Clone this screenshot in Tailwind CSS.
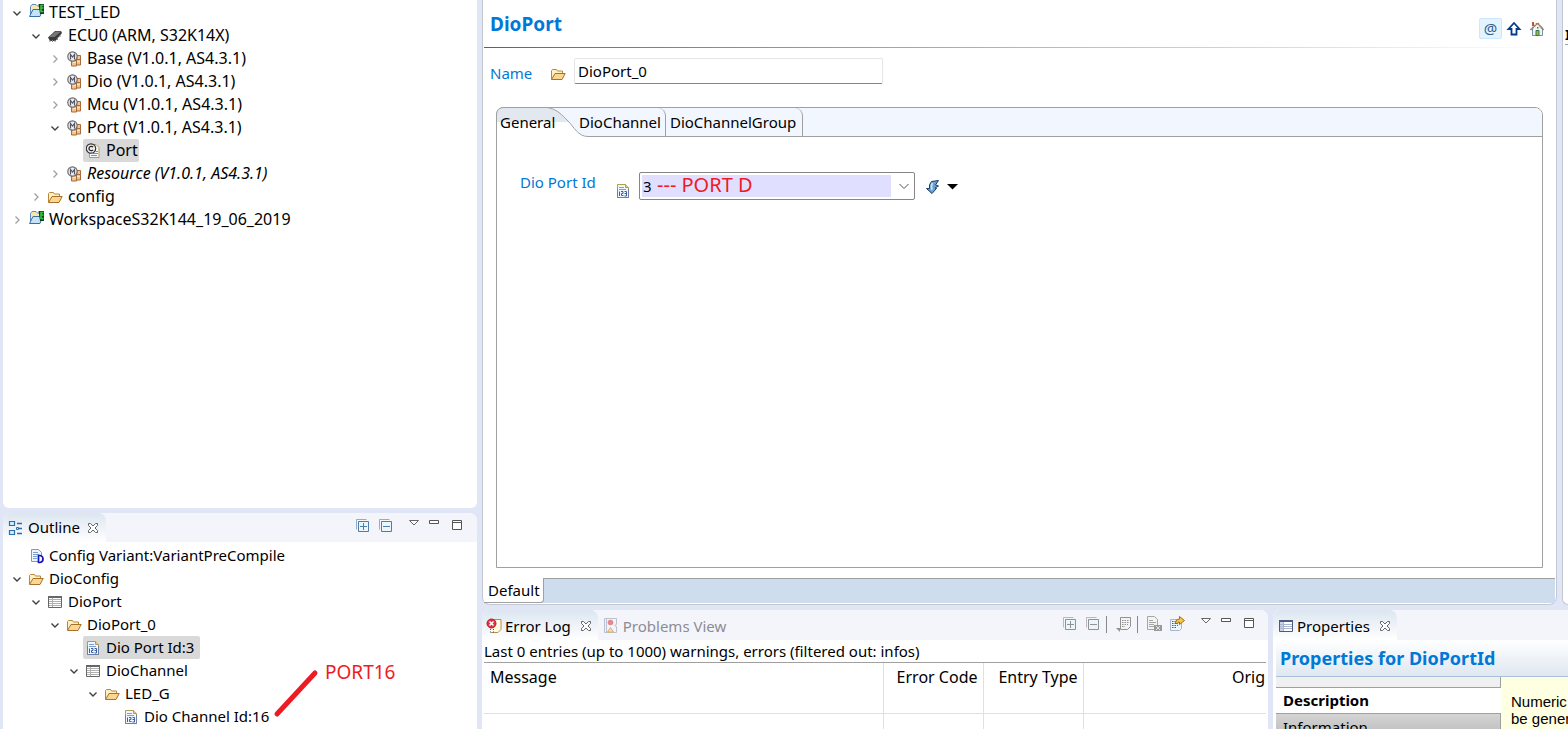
<!DOCTYPE html>
<html lang="en">

<head>
  <meta charset="UTF-8">
  <meta name="viewport" content="width=device-width, initial-scale=1.0">
  <title>DioPort</title>
  <script src="https://cdn.jsdelivr.net/npm/@tailwindcss/browser@4"></script>
</head>

<body class="bg-[#e1e6f6] font-['Noto_Sans','Open_Sans',sans-serif] text-[15px] leading-[23px] text-black">
  <!-- icon sheet -->
  <svg class="hidden">
    <symbol id="down" viewBox="0 0 16 16">
      <path d="M4.500 6.500 8 10l3.500-3.500" fill="none" stroke="#404040" stroke-width="1.400" />
    </symbol>
    <symbol id="right" viewBox="0 0 16 16">
      <path d="M6.500 4.500 10 8l-3.500 3.500" fill="none" stroke="#a0a0a0" stroke-width="1.300" />
    </symbol>
    <symbol id="project" viewBox="0 0 16 16">
      <path d="M1.500 12V3.500L3 1.500h4l1.500 1.500H11v9z" fill="#f7e7ae" stroke="#5f8cc0" />
      <path d="M.5 13.500 4 6.500h9.500L11 13.500z" fill="#c3e4f8" stroke="#3d6da6" />
      <path d="M9.500 1h5.500v10h-4z" fill="#173a1c" />
      <path d="M14.500 2.500H12v2.500h2.500M12 5.500v3h2.500" fill="none" stroke="#2fd03e" stroke-width="1.500" />
    </symbol>
    <symbol id="chip" viewBox="1 0 16 16">
      <path d="M1 9.500 8 3h6l1 2-6.500 8H3z" fill="#3b3b3b" />
      <path d="M2 9 8.500 3.500H14L7.500 9z" fill="#777" />
      <path d="M3 12v2M5.500 12v2M8 12v2M10.500 9.500V12M13 7v2" stroke="#8a8a8a" />
    </symbol>
    <symbol id="module" viewBox="1 0 16 16">
      <path d="M5.500 9.500h5V15h-5zM10.500 4.500h4v4h-4zM10.500 8.500h4V14h-4z" fill="#f0c48c" stroke="#a9693a" />
      <path d="M7 11.500h3M11 10.500h3" stroke="#fbe6c2" />
      <circle cx="6.500" cy="5.500" r="4.700" fill="#eeeef2" stroke="#6a6a72" stroke-width="1.200" />
      <path d="M4.500 8.500V3.500l2 2.500 2-2.500v5" fill="none" stroke="#55555f" stroke-width="1.200" />
    </symbol>
    <symbol id="cfile" viewBox="1 0 16 16">
      <path d="M4.500 1.500H11l3 3v10H4.500z" fill="#f4f8fd" stroke="#b39b55" />
      <path d="M6 12.500h6M8 10.500h5M11 8.500h2" stroke="#6c94ca" />
      <circle cx="6" cy="5.500" r="4.700" fill="#eee" stroke="#333" stroke-width="1.200" />
      <path d="M8 4.200a2.200 2.200 0 1 0 0 2.600" fill="none" stroke="#222" stroke-width="1.300" />
    </symbol>
    <symbol id="folder" viewBox="1 0 16 16">
      <path d="M1.500 13V4.500l1-1h4l1 1.500h5V7" fill="#fdf0c4" stroke="#b8873a" />
      <path d="M1.500 13.500 5 7.500h10.200L12 13.500z" fill="#f9d691" stroke="#a8702a" />
    </symbol>
    <symbol id="list" viewBox="1 0 16 16">
      <path d="M1.500 2.500h13v11h-13z" fill="#fff" stroke="#666" />
      <path d="M1 2h14v2H1z" fill="#666" />
      <path d="M5.500 4v9M2 5.500h12M2 7.500h12M2 9.500h12M2 11.500h12" stroke="#b0b0b0" />
    </symbol>
    <symbol id="num" viewBox="1 0 16 16">
      <path d="M2.500 1.500h8l3 3v10h-11z" fill="#f0f6fd" stroke="#b39b55" />
      <path d="M2.500 6v8.500h11V6" fill="none" stroke="#6b7fa8" />
      <path d="M10.500 1.500v3h3" fill="#e7cf8c" stroke="#b39b55" />
      <path d="M4 4.500h5M4 6.500h7" stroke="#7ba0d3" />
      <path d="M4.500 8.500V13M6 8.500h2v2H6.500v2H8.500M9.500 8.500h2V13h-2M9.500 10.500h2" fill="none" stroke="#3a5f9f" />
    </symbol>
    <symbol id="variant" viewBox="0 0 16 16">
      <path d="M2.500 1.500h7l3 3v9h-10z" fill="#eff5fc" stroke="#9b9877" />
      <path d="M4 4.500h5M4 6.500h6M4 8.500h4M4 10.500h4" stroke="#7ba0d3" />
      <path d="M9.500 7.500h1.500q3 .5 3 3.500t-3 3.500H9.500z" fill="#fff" stroke="#1414b8" stroke-width="1.700" />
    </symbol>
    <symbol id="outline" viewBox="0 0 16 16">
      <path d="M1.500 1.500h5v4h-5zM1.500 10.500h5v4h-5z" fill="#d4ecfa" stroke="#2b6da8" stroke-width="1.200" />
      <path d="M9 3.500h5M9 13.500h5M11 8.500h3" stroke="#2b6da8" stroke-width="1.300" />
      <path d="M8.500 7.500h2v2h-2z" fill="#d4ecfa" stroke="#2b6da8" />
    </symbol>
    <symbol id="close" viewBox="0 0 12 12">
      <path d="M1.500 1.500h2L6 4l2.500-2.500h2v2L8 6l2.500 2.500v2h-2L6 8l-2.500 2.500h-2v-2L4 6 1.500 3.500z" fill="#fff" stroke="#666" />
    </symbol>
    <symbol id="expand" viewBox="0 0 16 16">
      <path d="M1.500 11.500v-10h10" fill="none" stroke="currentColor" opacity=".6" />
      <path d="M3.500 3.500h10v10h-10z" fill="#eaf5fc" stroke="currentColor" />
      <path d="M5 8.500h7M8.500 5v7" stroke="currentColor" />
    </symbol>
    <symbol id="collapse" viewBox="0 0 16 16">
      <path d="M1.500 11.500v-10h10" fill="none" stroke="currentColor" opacity=".6" />
      <path d="M3.500 3.500h10v10h-10z" fill="#eaf5fc" stroke="currentColor" />
      <path d="M5 8.500h7" stroke="currentColor" />
    </symbol>
    <symbol id="menu" viewBox="0 0 12 12">
      <path d="M1.500 1.500h9L6 6z" fill="#fff" stroke="#666" />
    </symbol>
    <symbol id="min" viewBox="0 0 12 12">
      <path d="M1.500 1.500h9v3h-9z" fill="#fff" stroke="#555" />
    </symbol>
    <symbol id="max" viewBox="0 0 12 12">
      <path d="M1.500 1.500h9v9h-9zM1.500 3.500h9" fill="#fff" stroke="#555" />
    </symbol>
  </svg>

  <div class="flex h-screen gap-[5px] overflow-hidden pl-[3px]">
    <!-- left side: project tree + outline -->
    <aside class="flex w-[474px] shrink-0 flex-col gap-[5px]">
      <section class="flex-1 rounded-b-md bg-white pt-px">
        <ul class="text-base/[23px] whitespace-nowrap">
          <li class="flex items-center gap-px pl-[6px]">
            <button aria-label="Collapse"><svg class="size-4"><use href="#down" /></svg></button>
            <span class="flex gap-1 px-[3px]"><svg class="mt-[2px] size-4"><use href="#project" /></svg>TEST_LED</span>
          </li>
          <li class="flex items-center gap-px pl-[25px]">
            <button aria-label="Collapse"><svg class="size-4"><use href="#down" /></svg></button>
            <span class="flex items-center gap-1 px-[3px]"><svg class="size-4"><use href="#chip" /></svg>ECU0 (ARM, S32K14X)</span>
          </li>
          <li class="flex items-center gap-px pl-[44px]">
            <button aria-label="Expand"><svg class="size-4"><use href="#right" /></svg></button>
            <span class="flex items-center gap-1 px-[3px]"><svg class="size-4"><use href="#module" /></svg>Base (V1.0.1, AS4.3.1)</span>
          </li>
          <li class="flex items-center gap-px pl-[44px]">
            <button aria-label="Expand"><svg class="size-4"><use href="#right" /></svg></button>
            <span class="flex items-center gap-1 px-[3px]"><svg class="size-4"><use href="#module" /></svg>Dio (V1.0.1, AS4.3.1)</span>
          </li>
          <li class="flex items-center gap-px pl-[44px]">
            <button aria-label="Expand"><svg class="size-4"><use href="#right" /></svg></button>
            <span class="flex items-center gap-1 px-[3px]"><svg class="size-4"><use href="#module" /></svg>Mcu (V1.0.1, AS4.3.1)</span>
          </li>
          <li class="flex items-center gap-px pl-[44px]">
            <button aria-label="Collapse"><svg class="size-4"><use href="#down" /></svg></button>
            <span class="flex items-center gap-1 px-[3px]"><svg class="size-4"><use href="#module" /></svg>Port (V1.0.1, AS4.3.1)</span>
          </li>
          <li class="flex items-center pl-[80px]">
            <span class="flex items-center gap-1 rounded-xs bg-[#d9d9d9] pr-px pl-[3px]"><svg class="size-4"><use href="#cfile" /></svg>Port</span>
          </li>
          <li class="flex items-center gap-px pl-[44px]">
            <button aria-label="Expand"><svg class="size-4"><use href="#right" /></svg></button>
            <span class="flex items-center gap-1 px-[3px] italic"><svg class="size-4"><use href="#module" /></svg>Resource (V1.0.1, AS4.3.1)</span>
          </li>
          <li class="flex items-center gap-px pl-[25px]">
            <button aria-label="Expand"><svg class="size-4"><use href="#right" /></svg></button>
            <span class="flex items-center gap-1 px-[3px]"><svg class="size-4"><use href="#folder" /></svg>config</span>
          </li>
          <li class="flex items-center gap-px pl-[6px]">
            <button aria-label="Expand"><svg class="size-4"><use href="#right" /></svg></button>
            <span class="flex gap-1 px-[3px]"><svg class="mt-[2px] size-4"><use href="#project" /></svg>WorkspaceS32K144_19_06_2019</span>
          </li>
        </ul>
      </section>

      <section class="relative h-[216px] shrink-0 overflow-hidden rounded-t-lg bg-white">
        <div class="flex h-[29px] items-stretch justify-between bg-[#f4f5fb]">
          <div class="flex items-center gap-1 rounded-tr-lg bg-linear-to-b from-[#dce6f0] to-white pr-[7px] pl-[5px]">
            <svg class="size-4"><use href="#outline" /></svg>
            <span>Outline</span>
            <button aria-label="Close" class="ml-[3px]"><svg class="size-3"><use href="#close" /></svg></button>
          </div>
          <div class="flex items-start pt-[5px] pr-[14px] text-[#4f7da8]">
            <button aria-label="Expand all" class="mr-[7px]"><svg class="size-4"><use href="#expand" /></svg></button>
            <button aria-label="Collapse all" class="mr-[14px]"><svg class="size-4"><use href="#collapse" /></svg></button>
            <button aria-label="Menu" class="mt-px mr-2"><svg class="size-3"><use href="#menu" /></svg></button>
            <button aria-label="Minimize" class="mt-px mr-[11px]"><svg class="size-3"><use href="#min" /></svg></button>
            <button aria-label="Maximize" class="mt-px"><svg class="size-3"><use href="#max" /></svg></button>
          </div>
        </div>
        <ul class="pt-[2px] whitespace-nowrap">
          <li class="flex items-center pl-[23px]">
            <span class="flex items-center gap-1 px-[3px]"><svg class="size-4"><use href="#variant" /></svg>Config Variant:VariantPreCompile</span>
          </li>
          <li class="flex items-center gap-px pl-[6px]">
            <button aria-label="Collapse"><svg class="size-4"><use href="#down" /></svg></button>
            <span class="flex items-center gap-1 px-[3px]"><svg class="size-4"><use href="#folder" /></svg>DioConfig</span>
          </li>
          <li class="flex items-center gap-px pl-[25px]">
            <button aria-label="Collapse"><svg class="size-4"><use href="#down" /></svg></button>
            <span class="flex items-center gap-1 px-[3px]"><svg class="size-4"><use href="#list" /></svg>DioPort</span>
          </li>
          <li class="flex items-center gap-px pl-[44px]">
            <button aria-label="Collapse"><svg class="size-4"><use href="#down" /></svg></button>
            <span class="flex items-center gap-1 px-[3px]"><svg class="size-4"><use href="#folder" /></svg>DioPort_0</span>
          </li>
          <li class="flex items-center pl-[80px]">
            <span class="flex items-center gap-1 rounded-xs bg-[#d9d9d9] pr-[6px] pl-[3px]"><svg class="size-4"><use href="#num" /></svg>Dio Port Id:3</span>
          </li>
          <li class="flex items-center gap-px pl-[63px]">
            <button aria-label="Collapse"><svg class="size-4"><use href="#down" /></svg></button>
            <span class="flex items-center gap-1 px-[3px]"><svg class="size-4"><use href="#list" /></svg>DioChannel</span>
          </li>
          <li class="flex items-center gap-px pl-[82px]">
            <button aria-label="Collapse"><svg class="size-4"><use href="#down" /></svg></button>
            <span class="flex items-center gap-1 px-[3px]"><svg class="size-4"><use href="#folder" /></svg>LED_G</span>
          </li>
          <li class="flex items-center pl-[118px]">
            <span class="flex items-center gap-1 px-[3px]"><svg class="size-4"><use href="#num" /></svg>Dio Channel Id:16</span>
          </li>
        </ul>
        <!-- red marker note on the channel id -->
        <div class="absolute top-[148px] left-[270px] flex items-start gap-1 text-[19px] text-[#ed1c24]">
          <svg class="mt-[8px] h-[50px] w-[48px]"><path d="M4 45 42 4" stroke="#ed1c24" stroke-width="5" stroke-linecap="round" /></svg>
          <span>PORT16</span>
        </div>
      </section>
    </aside>

    <main class="flex min-w-0 flex-1 flex-col gap-[5px]">
      <div class="flex min-h-0 flex-1 gap-[5px]">
        <!-- editor -->
        <section class="flex min-w-0 flex-1 flex-col rounded-b-lg border border-t-0 border-[#c3c7d0] bg-white pb-px">
          <header class="mr-[9px] ml-px flex h-[47px] items-start justify-between pl-[6px]">
            <h1 class="pt-[13px] text-[19px] font-bold text-[#0078d7]">DioPort</h1>
            <div class="flex items-center gap-1 pt-[18px] pr-[2px]">
              <button class="h-[21px] w-[23px] rounded-xs border border-[#cce8ff] bg-[#e5f3ff] text-[15px] leading-[17px] text-[#2f5f8f]">@</button>
              <button aria-label="Up"><svg class="size-4" viewBox="0 0 16 16"><path d="M8 2 2.500 8H5.500v5.500h5V8h3z" fill="#fff" stroke="#003a8c" stroke-width="1.800" /></svg></button>
              <button aria-label="Home" class="ml-[3px]"><svg class="size-4" viewBox="0 0 16 16"><path d="M3.500 7v7.500h10V7l-5-4.500z" fill="#eaf4fb" stroke="#7890a8" /><path d="M1.500 9 8.500 2l6 7" fill="none" stroke="#a8794e" stroke-width="1.700" stroke-dasharray="2 .5" /><path d="M3 1h2v4H3z" fill="#b55a3c" /><path d="M7 9.500h3v5H7z" fill="#8cc63f" stroke="#41723a" /><path d="M8 6h1.500v1.500H8z" fill="#2d8a50" /></svg></button>
            </div>
          </header>
          <div class="mr-[9px] ml-px h-px bg-linear-to-r from-[#0078d7] to-white"></div>

          <div class="flex items-center pt-[9px] pl-[7px]">
            <label for="name" class="w-[61px] pt-[5px] text-[#0078d7]">Name</label>
            <svg class="mt-[5px] size-4"><use href="#folder" /></svg>
            <input id="name" value="DioPort_0"
              class="ml-[7px] h-[26px] w-[309px] rounded-xs border border-[#e5e5e5] border-b-[#868686] px-[3px] outline-none">
          </div>

          <div class="mt-[22px] mr-[13px] ml-[13px] flex flex-1 flex-col rounded-t-lg border border-[#a0a0a0]">
            <div class="flex h-[29px] rounded-t-[7px] border-b border-[#a0a0a0] bg-[#f2f6fe]">
              <button class="relative w-[79px] pl-[3px] text-left">
                <svg class="absolute -top-px -left-px h-[30px] w-[92px]">
                  <path d="M1 30V8Q1 1 8 1H51C61 2 66 8 72 14S82 29 92 29V30z" fill="#fff" />
                  <path d="M1 15V8Q1 1 8 1H51C61 2 66 8 73 15z" fill="#e1e8f0" />
                  <path d="M.5 30V8Q.5 .5 8 .5H51C61 2 66 8 72 14S82 29.500 92 29.500" fill="none" stroke="#a0a0a0" />
                </svg>
                <span class="relative">General</span>
              </button>
              <button class="rounded-tr-lg border-r border-[#a0a0a0] pr-1 pl-[3px]">DioChannel</button>
              <button class="rounded-tr-lg border-r border-[#a0a0a0] pr-[6px] pl-1">DioChannelGroup</button>
            </div>
            <div class="flex items-start pt-[35px] pl-[23px]">
              <label for="portId" class="w-[96px] leading-5 text-[#0078d7]">Dio Port Id</label>
              <svg class="mt-[11px] size-4"><use href="#num" /></svg>
              <div class="relative ml-[7px] flex h-[28px] w-[276px] items-center rounded-xs border border-[#868686] pl-[2px]">
                <select id="portId" class="h-[22px] w-[249px] appearance-none bg-[#e1dfff] pl-px leading-[22px] outline-none">
                  <option>3</option>
                </select>
                <svg class="ml-[5px] size-4" viewBox="0 0 16 16"><path d="m3.500 6 4.500 4.500L12.500 6" fill="none" stroke="#555" /></svg>
                <span class="absolute top-0 left-[17px] text-[20px] text-[#ed1c24]">--- PORT D</span>
              </div>
              <button aria-label="Actions" class="mt-[7px] ml-[10px] flex items-center gap-[6px]">
                <svg class="size-4" viewBox="0 0 16 16"><path d="M6.500 2.500 13.500 1.500 10.500 6l3 1-3.500 2 1.500.5L7 14.500 1.500 9.500h3q-1-4 2-7z" fill="#6f9fcb" stroke="#173f6e" /><path d="M7.500 4q-2 3-.5 7" fill="none" stroke="#cfe4f5" stroke-width="1.500" /></svg>
                <svg class="h-[6px] w-[11px]"><path d="M0 0h11L5.500 5.500z" /></svg>
              </button>
            </div>
          </div>

          <div class="mt-[10px] mr-px ml-px flex h-[25px] bg-[#cddded]">
            <button class="rounded-br-sm border-r border-b border-[#a0a0a0] bg-white pr-[3px] pl-1">Default</button>
            <div class="flex-1 border-t border-[#a0a0a0]"></div>
          </div>
        </section>

        <!-- next view, mostly beyond the window edge -->
        <section class="w-[6px] shrink-0 overflow-hidden rounded-bl-lg border-b border-l border-[#c3c7d0] bg-white pt-[23px] pl-[2px]">
          <div class="h-[22px] overflow-hidden border-b border-[#a0a0a0] font-bold">I</div>
        </section>
      </div>

      <div class="flex h-[119px] shrink-0 gap-[5px]">
        <!-- error log -->
        <section class="min-w-0 flex-1 overflow-hidden rounded-t-lg bg-white whitespace-nowrap">
          <div class="flex h-[30px] justify-between bg-[#f4f5fb]">
            <div class="flex">
              <div class="flex items-center rounded-tr-lg bg-linear-to-b from-[#dce6f0] to-white pt-[2px] pr-[6px] pl-1">
                <svg class="size-4" viewBox="0 0 16 16"><path d="M7 1.500h8v10l-3 3H5" fill="#fffbe9" stroke="#b3913f" /><path d="M4 11.500h1M7 11.500h1M4 14h1M7 14h1" stroke="#1f5fa8" /><circle cx="5.500" cy="5.500" r="4.500" fill="#e03442" stroke="#b01c2c" /><path d="m3.500 3.500 4 4m0-4-4 4" stroke="#fff" stroke-width="1.500" /></svg>
                <span class="ml-[3px]">Error Log</span>
                <button aria-label="Close" class="ml-[9px]"><svg class="size-3"><use href="#close" /></svg></button>
              </div>
              <button class="flex items-center gap-1 pt-[2px] pl-[5px] text-[#8c8c94]">
                <svg class="size-4" viewBox="0 0 16 16"><path d="M1.500 .5h12v6l-2 1 2 1v6h-12z" fill="#f2f4f9" stroke="#b9c0d0" /><path d="M3.500 1v14" stroke="#b9c0d0" /><circle cx="7.500" cy="4.500" r="2.800" fill="#e7868c" /><path d="M7.500 9.500 10.500 14h-6z" fill="#f6deb0" stroke="#d9ae74" /></svg>
                Problems View
              </button>
            </div>
            <div class="flex items-start pt-[6px] pr-[13px] text-[#929292]">
              <button aria-label="Expand all" class="mr-[7px]"><svg class="size-4"><use href="#expand" /></svg></button>
              <button aria-label="Collapse all" class="mr-[5px]"><svg class="size-4"><use href="#collapse" /></svg></button>
              <span class="mr-[9px] h-[17px] w-px bg-[#888]"></span>
              <button aria-label="Filters" class="mr-[5px]"><svg class="size-4" viewBox="0 0 16 16"><path d="M4.500 1.500h10v9l-3 3h-7z" fill="#f3f3f3" stroke="#929292" /><path d="M6 4.500h7M6 6.500h7M6 8.500h6M6 10.500h3" stroke="#929292" stroke-dasharray="1.500 1" /><path d="M0 12h4v4z" fill="#929292" /></svg></button>
              <span class="mr-[8px] h-[17px] w-px bg-[#888]"></span>
              <button aria-label="Delete log" class="mr-[7px]"><svg class="size-4" viewBox="0 0 16 16"><path d="M1.500 .5h7l3 3v10h-10z" fill="#f3f3f3" stroke="#a5a5a5" /><path d="M3 4.500h4M3 6.500h7M3 8.500h5M3 10.500h5" stroke="#a5a5a5" /><path d="M8 9h8v6H8z" fill="#999" /><path d="m10 10 4 4m0-4-4 4" stroke="#e5e5e5" /></svg></button>
              <button aria-label="Restore log" class="mr-[15px]"><svg class="size-4" viewBox="0 0 16 16"><path d="M1.500 3.500h11v9l-2 2h-9z" fill="#eef6fd" stroke="#a8b6c8" /><path d="M3 5.500h5M3 7.500h6M3 9.500h6M3 11.500h4" stroke="#2d68ad" stroke-dasharray="1.500 1" /><path d="M6.500 7q0-4 4-4V.5L15.500 4.500l-5 4V6q-2 0-2 2z" fill="#f5c84c" stroke="#9c6e16" /></svg></button>
              <button aria-label="Menu" class="mt-px mr-2"><svg class="size-3"><use href="#menu" /></svg></button>
              <button aria-label="Minimize" class="mt-px mr-[11px]"><svg class="size-3"><use href="#min" /></svg></button>
              <button aria-label="Maximize" class="mt-px"><svg class="size-3"><use href="#max" /></svg></button>
            </div>
          </div>
          <div class="h-[22px] pl-[2px]">Last 0 entries (up to 1000) warnings, errors (filtered out: infos)</div>
          <div class="mr-[2px] ml-[2px] overflow-hidden border-t border-[#a0a0a0]">
            <table class="w-full table-fixed text-base/[23px]">
              <thead>
                <tr class="h-[50px] border-b border-[#e0e0e0] align-top">
                  <th class="border-r border-[#e0e0e0] pt-[3px] pl-[6px] text-left font-normal">Message</th>
                  <th class="w-[100px] border-r border-[#e0e0e0] pt-[3px] pr-[5px] text-right font-normal">Error Code</th>
                  <th class="w-[100px] border-r border-[#e0e0e0] pt-[3px] pr-[5px] text-right font-normal">Entry Type</th>
                  <th class="w-[183px] pt-[3px] pr-px text-right font-normal">Orig</th>
                </tr>
              </thead>
              <tbody>
                <tr class="h-[23px]">
                  <td class="border-r border-[#e0e0e0]"></td>
                  <td class="border-r border-[#e0e0e0]"></td>
                  <td class="border-r border-[#e0e0e0]"></td>
                  <td></td>
                </tr>
              </tbody>
            </table>
          </div>
        </section>

        <!-- properties -->
        <section class="flex w-[295px] shrink-0 flex-col overflow-hidden rounded-tl-lg bg-white whitespace-nowrap">
          <div class="flex h-[30px] shrink-0 bg-[#f4f5fb]">
            <div class="flex items-center rounded-tr-lg bg-linear-to-b from-[#dce6f0] to-white pt-[2px] pr-[6px] pl-[5px]">
              <svg class="size-4" viewBox="0 0 16 16"><path d="M1.500 2.500h13v11h-13z" fill="#fff" stroke="#4a5a80" /><path d="M1 2h14v2H1z" fill="#4a5a80" /><path d="M2 4h3v9H2z" fill="#c8d5ea" /><path d="M5.500 4v9M2 6.500h12M2 8.500h12M2 10.500h12" stroke="#a9b5cc" /></svg>
              <span class="ml-[3px]">Properties</span>
              <button aria-label="Close" class="ml-[9px]"><svg class="size-3"><use href="#close" /></svg></button>
            </div>
          </div>
          <h2 class="ml-[3px] h-[37px] shrink-0 border-b border-[#a8c0dc] bg-linear-to-b from-white to-[#dfe7f0] pt-[7px] pl-1 text-[18px] font-bold text-[#0078d7]">Properties for DioPortId</h2>
          <div class="ml-[3px] flex min-h-0 flex-1">
            <div class="flex w-[225px] shrink-0 flex-col">
              <div class="h-[11px] shrink-0 border-r border-b border-[#a0a0a0] bg-[#f0f0f0]"></div>
              <button class="h-[26px] shrink-0 border-b border-[#a0a0a0] pl-[7px] text-left font-bold">Description</button>
              <button class="h-[26px] shrink-0 border-r border-[#a0a0a0] bg-linear-to-b from-[#d4d4d4] to-[#b8b8b8] pl-[7px] text-left">Information</button>
            </div>
            <p class="flex-1 overflow-hidden bg-[#ffffe1] pt-4 pl-[10px] font-['Liberation_Sans',sans-serif] leading-[17px]">Numeric<br>be gener</p>
          </div>
        </section>
      </div>
    </main>
  </div>
</body>

</html>
